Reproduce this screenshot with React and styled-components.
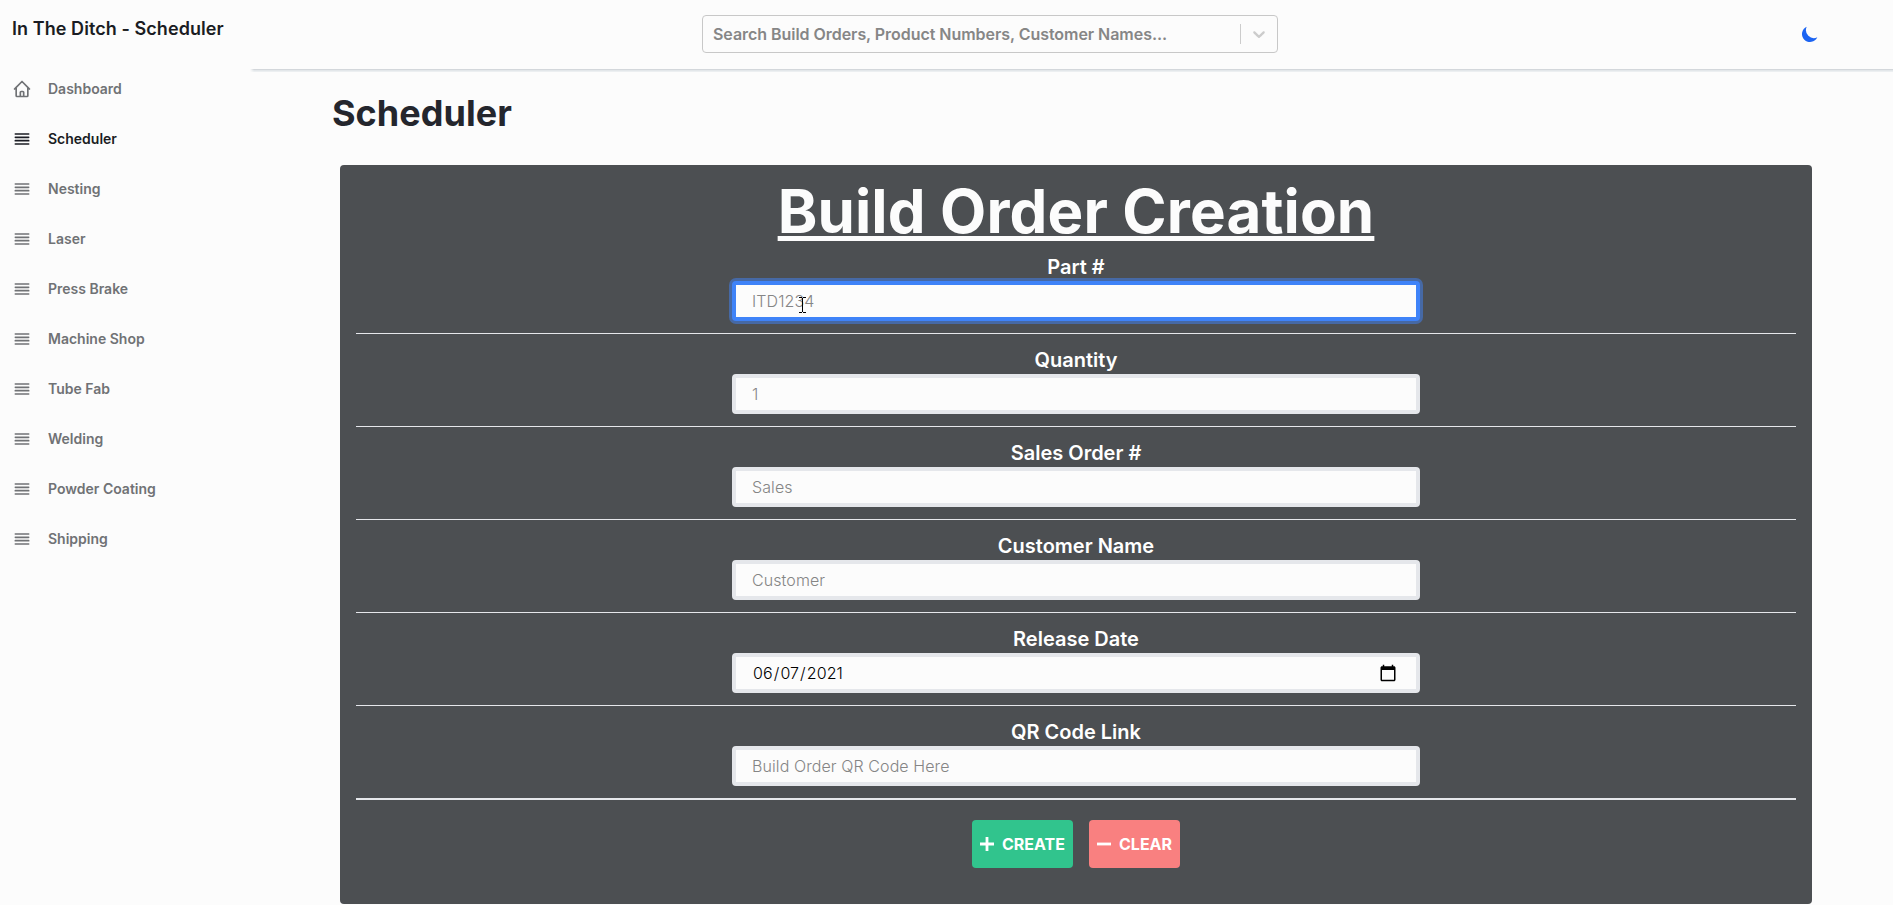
import React from "react";
import styled, { createGlobalStyle, css } from "styled-components";

const GlobalStyle = createGlobalStyle`
  *, *::before, *::after { box-sizing: border-box; }
  html, body { margin: 0; height: 100%; background: #fcfcfc; overflow: hidden; }
  body, input, button { font-family: Inter, "Liberation Sans", sans-serif; }
  h1, h2, p, ul { margin: 0; padding: 0; }
`;

const Page = styled.div`
  display: flex;
  height: 905px;
  background: #fcfcfc;
  color: #24262d;
  overflow: hidden;
`;

const Sidebar = styled.aside`
  flex: 0 0 250px;
  padding: 15px 12px 0;
`;

const Brand = styled.div`
  font-size: 18px;
  line-height: 28px;
  font-weight: 600;
  letter-spacing: 0.07px;
  color: #1a1c23;
  white-space: nowrap;
`;

const NavList = styled.ul`
  list-style: none;
  margin-top: 21px;
`;

const NavItem = styled.li`
  display: flex;
  align-items: center;
  gap: 16px;
  height: 50px;
  font-size: 14px;
  line-height: 20px;
  font-weight: 600;
  color: ${(p) => (p.$active ? "#1a1c23" : "#707275")};
`;

const NavIcon = styled.svg`
  width: 20px;
  height: 20px;
  fill: none;
  stroke: currentColor;
  stroke-width: 2;
  stroke-linecap: round;
  stroke-linejoin: round;
`;

const Content = styled.div`
  flex: 1;
  min-width: 0;
`;

const Header = styled.header`
  display: flex;
  align-items: flex-start;
  justify-content: space-between;
  height: 72px;
  padding: 15px 73px 0 452px;
  background:
    linear-gradient(90deg, #fcfcfc, rgba(252, 252, 252, 0) 4px) bottom / 100% 3px no-repeat,
    linear-gradient(#d3d7db 1px, #e3e7ea 1px 2px, #eceff1 2px) bottom / 100% 3px no-repeat;
`;

const SearchBox = styled.div`
  display: flex;
  align-items: center;
  width: 576px;
  height: 38px;
  border: 1px solid #c8c8c8;
  border-radius: 4px;
`;

const SearchText = styled.div`
  flex: 1;
  padding-left: 10px;
  font-size: 16px;
  font-weight: 600;
  letter-spacing: -0.045px;
  color: #868686;
  white-space: nowrap;
`;

const Separator = styled.span`
  width: 1px;
  height: 20px;
  background: #cccccc;
`;

const Chevron = styled.svg`
  width: 20px;
  height: 20px;
  margin: 0 8px;
  fill: #cccccc;
`;

const Moon = styled.svg`
  width: 20px;
  height: 20px;
  margin-top: 9px;
  fill: #1c64f2;
`;

const Main = styled.main`
  padding: 21px 81px 0 82px;
`;

const PageTitle = styled.h1`
  font-size: 36px;
  line-height: 40px;
  font-weight: 700;
  letter-spacing: 0.05px;
`;

const Card = styled.section`
  display: flex;
  flex-direction: column;
  width: 1472px;
  height: 739px;
  margin: 32px 0 0 8px;
  padding: 16px;
  border-radius: 4px;
  background: #4c4f52;
`;

const CardTitle = styled.h2`
  font-size: 60px;
  line-height: 60px;
  font-weight: 700;
  letter-spacing: 0.14px;
  text-align: center;
  text-decoration: underline;
  text-decoration-thickness: 5px;
  text-underline-offset: 3px;
  text-decoration-skip-ink: none;
  color: #fcfcfc;
`;

const Field = styled.label`
  display: flex;
  flex-direction: column;
  align-items: center;
  padding: 12px 0;
  border-bottom: ${(p) => (p.$last ? 2 : 1)}px solid #e5e7eb;
`;

const FieldLabel = styled.span`
  font-size: 20px;
  line-height: 28px;
  font-weight: 600;
  color: #fff;
`;

const InputWrap = styled.span`
  position: relative;
  display: flex;
`;

const Input = styled.input`
  width: 688px;
  height: 40px;
  margin: 0;
  padding: 0 16px;
  border: 4px solid #e5e7eb;
  border-radius: 4px;
  outline: none;
  background: #fcfcfc;
  color: #000;
  font-size: 16px;
  font-weight: 300;
  letter-spacing: 0.09px;
  &::placeholder { color: #858585; opacity: 1; }
  &::-webkit-calendar-picker-indicator {
    width: 18px;
    height: 18px;
    padding: 0;
    margin-right: 3px;
    background-size: 18px 18px;
  }
  ${(p) =>
    p.$focused &&
    css`
      border-color: #3f83f8;
      box-shadow: 0 0 0 3px rgba(63, 131, 248, 0.5);
    `}
`;

const TextCursor = styled.svg`
  position: absolute;
  left: 67px;
  top: 16px;
  width: 7px;
  height: 16px;
  fill: none;
  stroke: #000;
`;

const Actions = styled.div`
  display: flex;
  justify-content: center;
  gap: 16px;
  margin-top: 20px;
`;

const ActionButton = styled.button`
  display: flex;
  align-items: center;
  gap: 5px;
  width: ${(p) => p.$width}px;
  height: 48px;
  padding: 0 5px;
  border: 0;
  border-radius: 4px;
  background: ${(p) => p.$color};
  color: #fff;
  font-size: 16px;
  font-weight: 700;
  white-space: nowrap;
`;

const ButtonIcon = styled.svg`
  flex: none;
  width: 20px;
  height: 20px;
  fill: none;
  stroke: currentColor;
  stroke-width: 2.8;
`;

const HOME =
  "M3 12l2-2m0 0l7-7 7 7M5 10v10a1 1 0 001 1h3m10-11l2 2m-2-2v10a1 1 0 01-1 1h-3m-6 0a1 1 0 001-1v-4a1 1 0 011-1h2a1 1 0 011 1v4a1 1 0 001 1m-6 0h6";
const LINES = "M4 6h16M4 10h16M4 14h16M4 18h16";

const NAV = [
  "Dashboard",
  "Scheduler",
  "Nesting",
  "Laser",
  "Press Brake",
  "Machine Shop",
  "Tube Fab",
  "Welding",
  "Powder Coating",
  "Shipping",
];

const FIELDS = [
  { label: "Part #", placeholder: "ITD1234", focused: true },
  { label: "Quantity", placeholder: "1" },
  { label: "Sales Order #", placeholder: "Sales" },
  { label: "Customer Name", placeholder: "Customer" },
  { label: "Release Date", type: "date", value: "2021-06-07" },
  { label: "QR Code Link", placeholder: "Build Order QR Code Here" },
];

export default function App() {
  return (
    <>
      <GlobalStyle />
      <Page>
        <Sidebar>
          <Brand>In The Ditch - Scheduler</Brand>
          <NavList>
            {NAV.map((name) => (
              <NavItem key={name} $active={name === "Scheduler"}>
                <NavIcon viewBox="0 0 24 24">
                  <path d={name === "Dashboard" ? HOME : LINES} />
                </NavIcon>
                {name}
              </NavItem>
            ))}
          </NavList>
        </Sidebar>
        <Content>
          <Header>
            <SearchBox>
              <SearchText>Search Build Orders, Product Numbers, Customer Names...</SearchText>
              <Separator />
              <Chevron viewBox="0 0 20 20">
                <path d="M4.516 7.548c0.436-0.446 1.043-0.481 1.576 0l3.908 3.747 3.908-3.747c0.533-0.481 1.141-0.446 1.574 0 0.436 0.445 0.408 1.197 0 1.615-0.406 0.418-4.695 4.502-4.695 4.502-0.217 0.223-0.502 0.335-0.787 0.335s-0.57-0.112-0.789-0.335c0 0-4.287-4.084-4.695-4.502s-0.436-1.17 0-1.615z" />
              </Chevron>
            </SearchBox>
            <Moon viewBox="0 0 20 20">
              <path d="M17.293 13.293A8 8 0 016.707 2.707a8.001 8.001 0 1010.586 10.586z" />
            </Moon>
          </Header>
          <Main>
            <PageTitle>Scheduler</PageTitle>
            <Card>
              <CardTitle>Build Order Creation</CardTitle>
              {FIELDS.map((f, i) => (
                <Field key={f.label} $last={i === FIELDS.length - 1}>
                  <FieldLabel>{f.label}</FieldLabel>
                  <InputWrap>
                    <Input
                      type={f.type || "text"}
                      placeholder={f.placeholder}
                      defaultValue={f.value}
                      $focused={f.focused}
                    />
                    {f.focused && (
                      <TextCursor viewBox="0 0 7 16">
                        <path d="M0 0.5h3M4 0.5h3M3.5 1v14M0 15.5h3M4 15.5h3" />
                      </TextCursor>
                    )}
                  </InputWrap>
                </Field>
              ))}
              <Actions>
                <ActionButton $color="#31c48d" $width={101}>
                  <ButtonIcon viewBox="0 0 20 20">
                    <path d="M3 10h14M10 3v14" />
                  </ButtonIcon>
                  CREATE
                </ActionButton>
                <ActionButton $color="#f98080" $width={91}>
                  <ButtonIcon viewBox="0 0 20 20">
                    <path d="M3 10h14" />
                  </ButtonIcon>
                  CLEAR
                </ActionButton>
              </Actions>
            </Card>
          </Main>
        </Content>
      </Page>
    </>
  );
}
